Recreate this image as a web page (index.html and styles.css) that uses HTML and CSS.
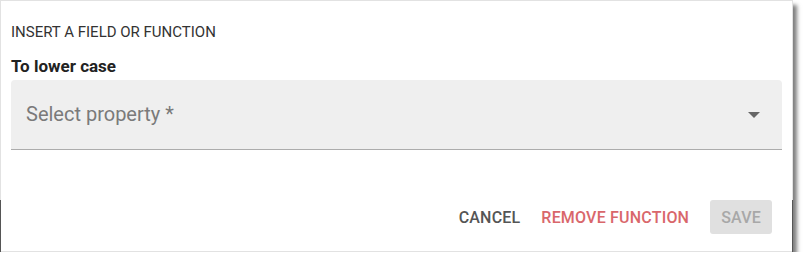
FILE: index.html
```html
<!DOCTYPE html>
<html>
<head>
<meta charset="utf-8">
<link rel="stylesheet" href="styles.css">
</head>
<body>
<div class="dialog">
  <div class="content">
    <div class="title">INSERT A FIELD OR FUNCTION</div>
    <div class="label">To lower case</div>
    <div class="select">
      <span class="placeholder">Select property *</span>
      <svg class="arrow" width="12" height="6" viewBox="0 0 12 6"><path d="M0 0 L12 0 L6 6 Z" fill="#666"/></svg>
    </div>
  </div>
  <div class="actions">
    <button class="btn cancel">CANCEL</button>
    <button class="btn remove">REMOVE FUNCTION</button>
    <button class="btn save" disabled>SAVE</button>
  </div>
  <div class="edge-left"></div>
  <div class="edge-right"></div>
</div>
</body>
</html>
```
FILE: styles.css
```css
html, body {
  margin: 0;
  padding: 0;
  background: #fff;
}
body {
  font-family: Roboto, "Liberation Sans", sans-serif;
}
.dialog {
  position: relative;
  box-sizing: border-box;
  width: 793px;
  height: 252px;
  border: 1px solid #e2e2e2;
  background: #fff;
  box-shadow: 4px 5px 4px rgba(0,0,0,0.5);
  display: flex;
  flex-direction: column;
}
.content {
  padding: 22px 10px 0 10px;
}
.title {
  font-size: 15px;
  color: #333;
  line-height: 18px;
}
.label {
  margin-top: 15px;
  font-size: 17px;
  font-weight: 700;
  color: #222;
  line-height: 20px;
}
.select {
  margin-top: 4px;
  height: 70px;
  box-sizing: border-box;
  background: #efefef;
  border-radius: 4px 4px 0 0;
  border-bottom: 1px solid #acacac;
  display: flex;
  align-items: center;
  justify-content: space-between;
  padding: 0 22px 1px 15px;
}
.placeholder {
  font-size: 20px;
  color: #7a7a7a;
}
.arrow {
  display: block;
  margin-top: 2px;
}
.actions {
  margin-top: auto;
  display: flex;
  justify-content: flex-end;
  align-items: center;
  padding: 0 20px 17px 0;
}
.btn {
  font-family: Roboto, "Liberation Sans", sans-serif;
  font-size: 16px;
  font-weight: 500;
  letter-spacing: 0.2px;
  border: none;
  background: transparent;
  height: 34px;
  padding: 0 10px;
  margin-left: 1px;
  border-radius: 3px;
}
.cancel { color: #555; }
.remove { color: #d9676b; }
.save {
  margin-left: 11px;
  padding: 0 11px;
  background: #e0e0e0;
  color: #a8a8a8;
}
.edge-left, .edge-right {
  position: absolute;
  top: 199px;
  bottom: -1px;
  width: 1px;
  background: #555;
}
.edge-left { left: -1px; }
.edge-right { right: -1px; }
```
